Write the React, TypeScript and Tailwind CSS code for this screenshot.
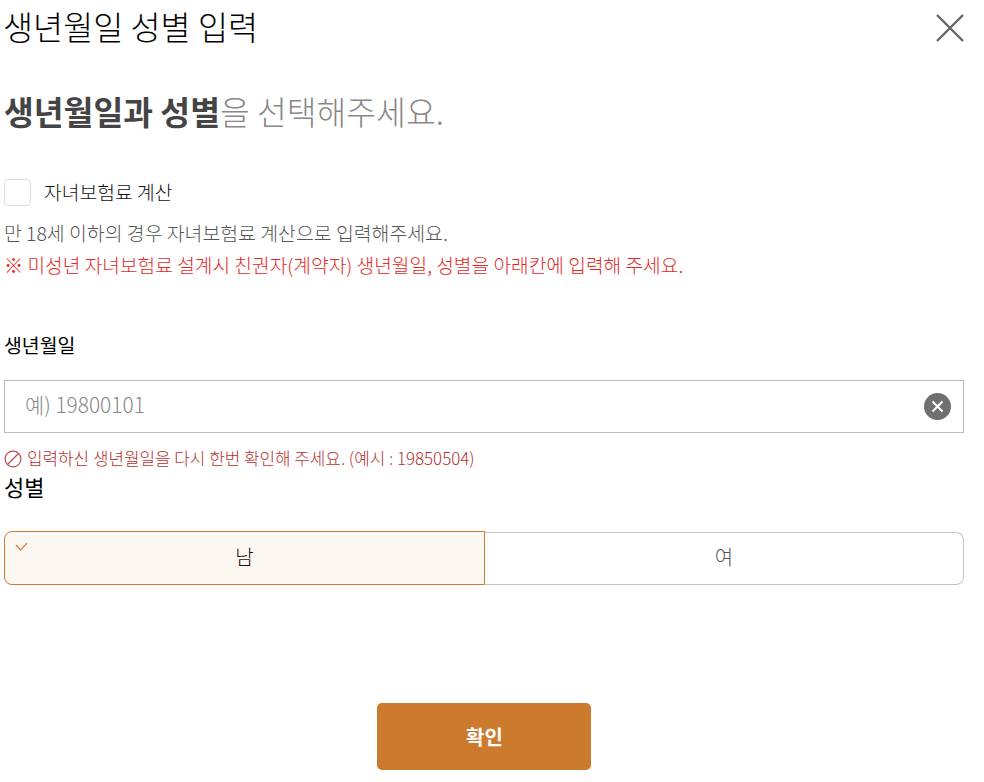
const font = "font-['Noto_Sans_CJK_KR','Noto_Sans',sans-serif]";

function CloseIcon() {
  return (
    <svg width="30" height="30" viewBox="0 0 30 30" fill="none" stroke="#666" strokeWidth="2.4">
      <path d="M2 2 L28 28 M28 2 L2 28" />
    </svg>
  );
}

function ClearIcon() {
  return (
    <svg width="27" height="27" viewBox="0 0 27 27" fill="none">
      <circle cx="13.5" cy="13.5" r="13.5" fill="#707070" />
      <path d="M8.5 8.5 L18.5 18.5 M18.5 8.5 L8.5 18.5" stroke="#fff" strokeWidth="2" />
    </svg>
  );
}

function ErrorIcon() {
  return (
    <svg width="18" height="18" viewBox="0 0 18 18" fill="none" stroke="#bf4b4b" strokeWidth="1.2">
      <circle cx="9" cy="9" r="7.9" />
      <path d="M3.5 14.5 L14.5 3.5" />
    </svg>
  );
}

export default function App() {
  return (
    <div className={`${font} relative h-[782px] w-[984px] overflow-hidden bg-white px-1 text-black`}>
      <div className="flex h-[56px] w-[960px] items-center justify-between">
        <h1 className="mt-[-5px] ml-[-1px] text-[32.7px] leading-[56px] font-light">생년월일 성별 입력</h1>
        <button className="mr-[-1px]">
          <CloseIcon />
        </button>
      </div>

      <p className="mt-[30px] text-[32.4px] leading-[50px] font-light text-[#888]">
        <strong className="font-bold text-[#444]">생년월일과 성별</strong>을 선택해주세요.
      </p>

      <label className="mt-[43px] flex items-center gap-[13px]">
        <span className="h-[27px] w-[27px] rounded-[4px] border border-[#ddd] bg-white" />
        <span className="text-[19.3px] leading-[27px] font-light text-[#111]">자녀보험료 계산</span>
      </label>

      <p className="mt-[11px] text-[19.4px] leading-[32px] font-light text-[#555]">
        만 18세 이하의 경우 자녀보험료 계산으로 입력해주세요.
      </p>
      <p className="text-[19.2px] leading-[32px] font-light text-[#e4281f]">
        ※ 미성년 자녀보험료 설계시 친권자(계약자) 생년월일, 성별을 아래칸에 입력해 주세요.
      </p>

      <h2 className="mt-[48px] text-[19.4px] leading-[32px] font-normal">생년월일</h2>

      <div className="mt-[19px] flex h-[53px] w-[960px] items-center justify-between border border-[#bbb] pl-[20px] pr-[12px]">
        <span className="mt-[-3px] text-[20.9px] font-light text-[#888]">예) 19800101</span>
        <ClearIcon />
      </div>

      <div className="mt-[14px] flex h-[24px] items-center gap-[5px]">
        <ErrorIcon />
        <span className="mt-[-2px] text-[16.9px] font-light text-[#b52f2f]">
          입력하신 생년월일을 다시 한번 확인해 주세요. (예시 : 19850504)
        </span>
      </div>

      <h2 className="mt-[-1px] text-[22px] leading-[32px] font-normal">성별</h2>

      <div className="mt-[30px] flex h-[53px] w-[960px]">
        <button className="relative mt-[-1px] flex h-[54px] w-[481px] items-center justify-center rounded-l-[8px] border border-[#cc7a2e] bg-[#fcf7f1] pb-[3px] text-[20px] font-light text-[#111]">
          남
          <svg className="absolute left-[10px] top-[10px]" width="14" height="10" viewBox="0 0 14 10" fill="none" stroke="#d9853a" strokeWidth="1.2">
            <path d="M1 3 L5.5 8 L12 1" />
          </svg>
        </button>
        <button className="flex h-[53px] flex-1 items-center justify-center rounded-r-[8px] border border-l-0 border-[#c4c4c4] pb-[3px] text-[20px] font-light text-[#555]">
          여
        </button>
      </div>

      <div className="mt-[118px] flex w-[960px] justify-center">
        <button className="h-[67px] w-[214px] rounded-[5px] bg-[#cc7a2e] pl-[1px] text-[20px] font-bold text-white">확인</button>
      </div>
    </div>
  );
}
